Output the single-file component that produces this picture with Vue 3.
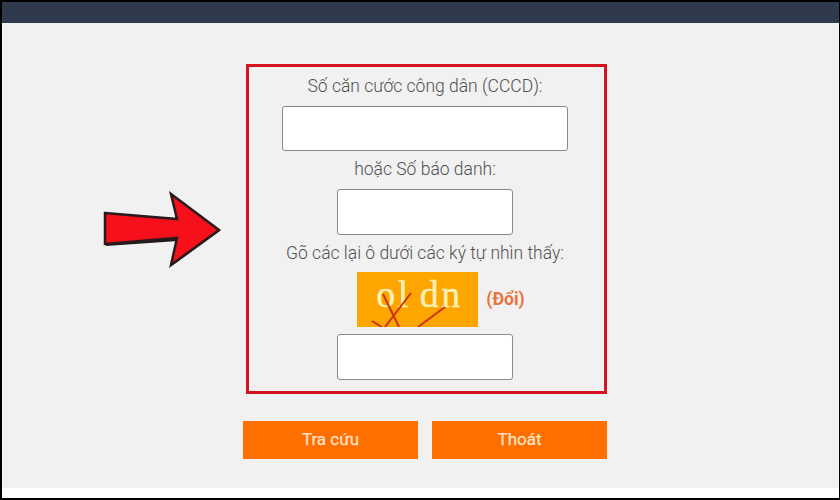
<template>
  <div class="screen">
    <div class="topbar"></div>
    <main class="page">
      <form class="lookup" @submit.prevent>
        <div class="lookup__box">
          <label class="lookup__label lookup__label--first">Số căn cước công dân (CCCD):</label>
          <input class="lookup__input lookup__input--wide" type="text" />
          <label class="lookup__label">hoặc Số báo danh:</label>
          <input class="lookup__input" type="text" />
          <label class="lookup__label">Gõ các lại ô dưới các ký tự nhìn thấy:</label>
          <div class="captcha">
            <div class="captcha__image">
              <span class="captcha__text">ol dn</span>
              <svg class="captcha__lines" width="121" height="55" viewBox="0 0 121 55">
                <path v-for="line in captchaLines" :key="line" :d="line" stroke="#c8350f" stroke-width="2" fill="none" />
              </svg>
            </div>
            <a class="captcha__change">(Đổi)</a>
          </div>
          <input class="lookup__input" type="text" />
        </div>
        <div class="lookup__actions">
          <button class="lookup__button" type="submit">Tra cứu</button>
          <button class="lookup__button" type="button">Thoát</button>
        </div>
      </form>
      <svg class="arrow" width="125" height="80" viewBox="0 0 125 80">
        <path d="M5 24 L77 30 L72 5 L119 39 L72 73 L77 49 L5 54 Z" fill="#1f1a1a" transform="translate(1 1)" />
        <path d="M5 22 L77 28 L71 3 L119 39 L71 74 L77 47 L5 53 Z" fill="#f5101c" stroke="#2a1a1c" stroke-width="2.5" stroke-linejoin="miter" />
      </svg>
    </main>
    <div class="strip"></div>
  </div>
</template>

<script setup>
const captchaLines = [
  'M26 22 L42 55',
  'M54 21 L28 55',
  'M15 49 L25 55',
  'M88 35 L61 55',
]
</script>

<style>
html, body {
  background: #000;
}
</style>

<style scoped>
.screen {
  width: 840px;
  height: 500px;
  box-sizing: border-box;
  padding: 2px 1px 2px 2px;
  display: flex;
  flex-direction: column;
  background: #000;
  font-family: Roboto, "Liberation Sans", sans-serif;
  overflow: hidden;
}

.topbar {
  height: 21px;
  background: #2f3b4c;
}

.page {
  position: relative;
  flex: 1;
  background: #f1f1f1;
  padding-left: 241px;
  display: flex;
}

.strip {
  height: 10px;
  background: #fff;
}

.lookup {
  width: 364px;
  padding-top: 41px;
  display: flex;
  flex-direction: column;
  align-items: flex-end;
}

.lookup__box {
  width: 361px;
  height: 330px;
  box-sizing: border-box;
  border: 3px solid #d3131f;
  padding-right: 3px;
  display: flex;
  flex-direction: column;
  align-items: center;
}

.lookup__label {
  font-size: 17.5px;
  font-weight: 300;
  line-height: 20px;
  color: #505050;
  margin: 8px 0 10px;
}

.lookup__label--first {
  margin-top: 9px;
}

.lookup__input {
  width: 176px;
  height: 46px;
  box-sizing: border-box;
  background: #fff;
  border: 1px solid #8a8a8a;
  border-radius: 3px;
  flex-shrink: 0;
}

.lookup__input--wide {
  width: 286px;
  height: 45px;
}

.captcha {
  display: flex;
  align-items: center;
  gap: 8px;
  margin: -1px 0 7px 32px;
}

.captcha__image {
  position: relative;
  width: 121px;
  height: 55px;
  background: #fea500;
  overflow: hidden;
}

.captcha__text {
  display: block;
  padding: 0 0 0 19px;
  font-family: "Liberation Serif", serif;
  font-size: 38px;
  line-height: 44px;
  color: #fdf1b5;
  word-spacing: -3px;
  letter-spacing: 2.5px;
  -webkit-text-stroke: 0.4px #fdf1b5;
}

.captcha__lines {
  position: absolute;
  left: 0;
  top: 0;
}

.captcha__change {
  padding-bottom: 2px;
  font-size: 17.5px;
  font-weight: 700;
  color: #e8743b;
}

.lookup__actions {
  width: 364px;
  display: flex;
  justify-content: space-between;
  margin-top: 27px;
}

.lookup__button {
  width: 175px;
  height: 38px;
  background: #ff6f00;
  border: 0;
  padding: 0 0 2px;
  color: #fde3c8;
  font-family: inherit;
  font-size: 17px;
  font-weight: 400;
  -webkit-text-stroke: 0.25px #fde3c8;
}

.arrow {
  position: absolute;
  left: 98px;
  top: 168px;
}
</style>
